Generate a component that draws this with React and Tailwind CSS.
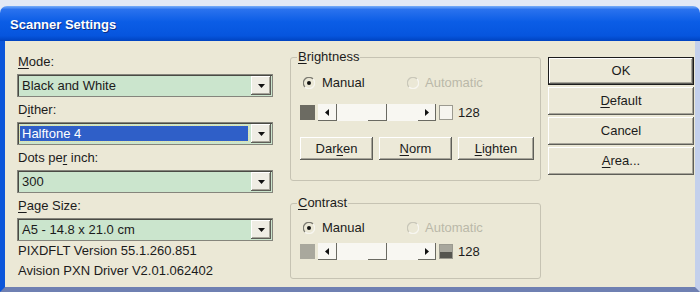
import React from 'react';

const btnShadow = 'shadow-[inset_-1px_-1px_0_#5e5e58,inset_1px_1px_0_#ffffff,inset_-2px_-2px_0_#a7a59a]';

function U({ children }) {
    return <span className="underline underline-offset-2">{children}</span>;
}

/* drop-down box, green like the original */
function Combo({ text, selected }) {
    return (
        <div className="flex h-[23px] border border-[#85857c] shadow-[inset_1px_1px_0_#4a4a44] bg-[#cbe5cd]">
            <div className="flex-1 flex items-center pl-[2px] pr-[3px] py-[3px]">
                {selected ? (
                    <div className="w-full h-full flex items-center pl-[2px] bg-[#2f5fc8] text-white outline outline-1 outline-dotted outline-[#e8e0a0]">
                        {text}
                    </div>
                ) : (
                    <span className="pl-[2px]">{text}</span>
                )}
            </div>
            <div className={`w-[20px] my-[1px] mr-[1px] flex items-center justify-center bg-[#efede4] ${btnShadow}`}>
                <svg width="7" height="4" viewBox="0 0 7 4"><path d="M0 0h7L3.5 4z" fill="#111" /></svg>
            </div>
        </div>
    );
}

function Radio({ checked, disabled }) {
    const dark = disabled ? '#c9c7b9' : '#7c7b72';
    return (
        <svg width="12" height="12" viewBox="0 0 12 12">
            <path d="M10 2A5.5 5.5 0 0 0 2 10" fill="none" stroke={dark} strokeWidth="1.3" />
            <path d="M10 2A5.5 5.5 0 0 1 2 10" fill="none" stroke="#f7f6f0" strokeWidth="1.3" />
            {checked && <circle cx="6" cy="6" r="2" fill="#111" />}
        </svg>
    );
}

function Slider({ lead, tail }) {
    return (
        <div className="flex items-center h-[17px]">
            <div className={`w-[15px] h-[15px] ${lead}`} />
            <div className="ml-[3px] flex h-[17px] w-[118px] bg-[#f8f7f2]">
                <div className="w-[19px] flex items-center justify-center border-r border-b border-[#6a6a62]">
                    <svg width="4" height="7" viewBox="0 0 4 7"><path d="M4 0v7L0 3.5z" fill="#111" /></svg>
                </div>
                <div className="flex-1" />
                <div className="w-[19px] border-r border-b border-[#6a6a62]" />
                <div className="flex-1" />
                <div className="w-[18px] flex items-center justify-center border-r border-b border-[#6a6a62]">
                    <svg width="4" height="7" viewBox="0 0 4 7"><path d="M0 0v7L4 3.5z" fill="#111" /></svg>
                </div>
            </div>
            <div className="ml-[3px] w-[14px] h-[15px] border border-[#9b9a90]">{tail}</div>
            <span className="ml-[5px]">128</span>
        </div>
    );
}

function Group({ title, children, className }) {
    return (
        <fieldset className={`border border-[#c6c3b3] rounded-[3px] pl-[6px] pr-[6px] ${className}`}>
            <legend className="px-[1px] leading-[16px]">{title}</legend>
            <div className="pl-[3px]">{children}</div>
        </fieldset>
    );
}

function Btn({ children, w }) {
    return (
        <div className={`h-[23px] ${w} flex items-center justify-center bg-[#ece9d8] ${btnShadow}`}>
            {children}
        </div>
    );
}

function SideBtn({ children, def }) {
    return (
        <div className={`h-[28px] flex items-center justify-center bg-[#ece9d8] ${def ? 'border border-[#1c1c1c]' : ''} ${btnShadow}`}>
            {children}
        </div>
    );
}

export default function App() {
    return (
        <div className="w-[700px] h-[292px] pt-[6px] bg-[#e2e9f5] text-[13px] text-[#1b1b1b] font-['Liberation_Sans',Arial,sans-serif] overflow-hidden">
            {/* Title bar */}
            <div className="h-[35px] flex items-center pl-[10px] pt-[3px] rounded-t-[7px] bg-[linear-gradient(to_bottom,#78aef8_0%,#2a72ee_10%,#0b5de6_45%,#0655de_85%,#0043c0_100%)]">
                <span className="font-bold text-white [text-shadow:1px_1px_0_#0b2f86]">Scanner Settings</span>
            </div>

            {/* Dialog body */}
            <div className="h-[251px] flex bg-[#ebe8d6] border-l-[5px] border-l-[#0b56da] border-r-[5px] border-r-[#c3d0ec] border-b-[5px] border-b-[#6f80b2] pt-[8px] pl-[12px]">
                {/* left column */}
                <div className="w-[256px] pt-[3px] flex flex-col gap-[3px]">
                    <div>
                        <div className="h-[20px] flex items-center pl-[1px]"><span><U>M</U>ode:</span></div>
                        <div className="mt-[2px]"><Combo text="Black and White" /></div>
                    </div>
                    <div>
                        <div className="h-[20px] flex items-center pl-[1px]"><span>D<U>i</U>ther:</span></div>
                        <div className="mt-[2px]"><Combo text="Halftone 4" selected /></div>
                    </div>
                    <div>
                        <div className="h-[20px] flex items-center pl-[1px]"><span>Dots pe<U>r</U> inch:</span></div>
                        <div className="mt-[2px]"><Combo text="300" /></div>
                    </div>
                    <div>
                        <div className="h-[20px] flex items-center pl-[1px]"><span><U>P</U>age Size:</span></div>
                        <div className="mt-[2px]"><Combo text="A5 - 14.8 x 21.0 cm" /></div>
                    </div>
                    <div className="-mt-[3px] pl-[1px]">
                        <div className="h-[20px] flex items-center">PIXDFLT Version 55.1.260.851</div>
                        <div className="h-[20px] flex items-center">Avision PXN Driver V2.01.062402</div>
                    </div>
                </div>

                {/* middle column */}
                <div className="ml-[17px] w-[251px] flex flex-col">
                    <Group title={<span><U>B</U>rightness</span>} className="pb-[20px]">
                        <div className="mt-[10px] h-[16px] flex items-center">
                            <div className="w-[107px] flex items-center pl-[3px]">
                                <Radio checked />
                                <span className="ml-[7px]">Manual</span>
                            </div>
                            <Radio disabled />
                            <span className="ml-[6px] text-[#bab8a9]">Automatic</span>
                        </div>
                        <div className="mt-[13px]">
                            <Slider lead="bg-[#6c6b62]" tail={<div className="w-full h-full bg-[#f6f5ef]" />} />
                        </div>
                        <div className="mt-[16px] flex gap-[6px]">
                            <Btn w="w-[73px]">Dar<U>k</U>en</Btn>
                            <Btn w="w-[73px]"><U>N</U>orm</Btn>
                            <Btn w="w-[76px]"><U>L</U>ighten</Btn>
                        </div>
                    </Group>

                    <Group title={<span><U>C</U>ontrast</span>} className="mt-[14px] pb-[18px]">
                        <div className="mt-[9px] h-[16px] flex items-center">
                            <div className="w-[107px] flex items-center pl-[3px]">
                                <Radio checked />
                                <span className="ml-[7px]">Manual</span>
                            </div>
                            <Radio disabled />
                            <span className="ml-[6px] text-[#bab8a9]">Automatic</span>
                        </div>
                        <div className="mt-[7px]">
                            <Slider
                                lead="bg-[#a9a89d]"
                                tail={
                                    <div className="w-full h-full flex flex-col">
                                        <div className="flex-1 bg-[#a8a79d]" />
                                        <div className="flex-1 bg-[#55554f]" />
                                    </div>
                                }
                            />
                        </div>
                    </Group>
                </div>

                {/* right column */}
                <div className="ml-[7px] w-[146px] mt-[8px] flex flex-col gap-[2px]">
                    <SideBtn def>OK</SideBtn>
                    <SideBtn><U>D</U>efault</SideBtn>
                    <SideBtn>Cancel</SideBtn>
                    <SideBtn><U>A</U>rea...</SideBtn>
                </div>
            </div>
        </div>
    );
}
